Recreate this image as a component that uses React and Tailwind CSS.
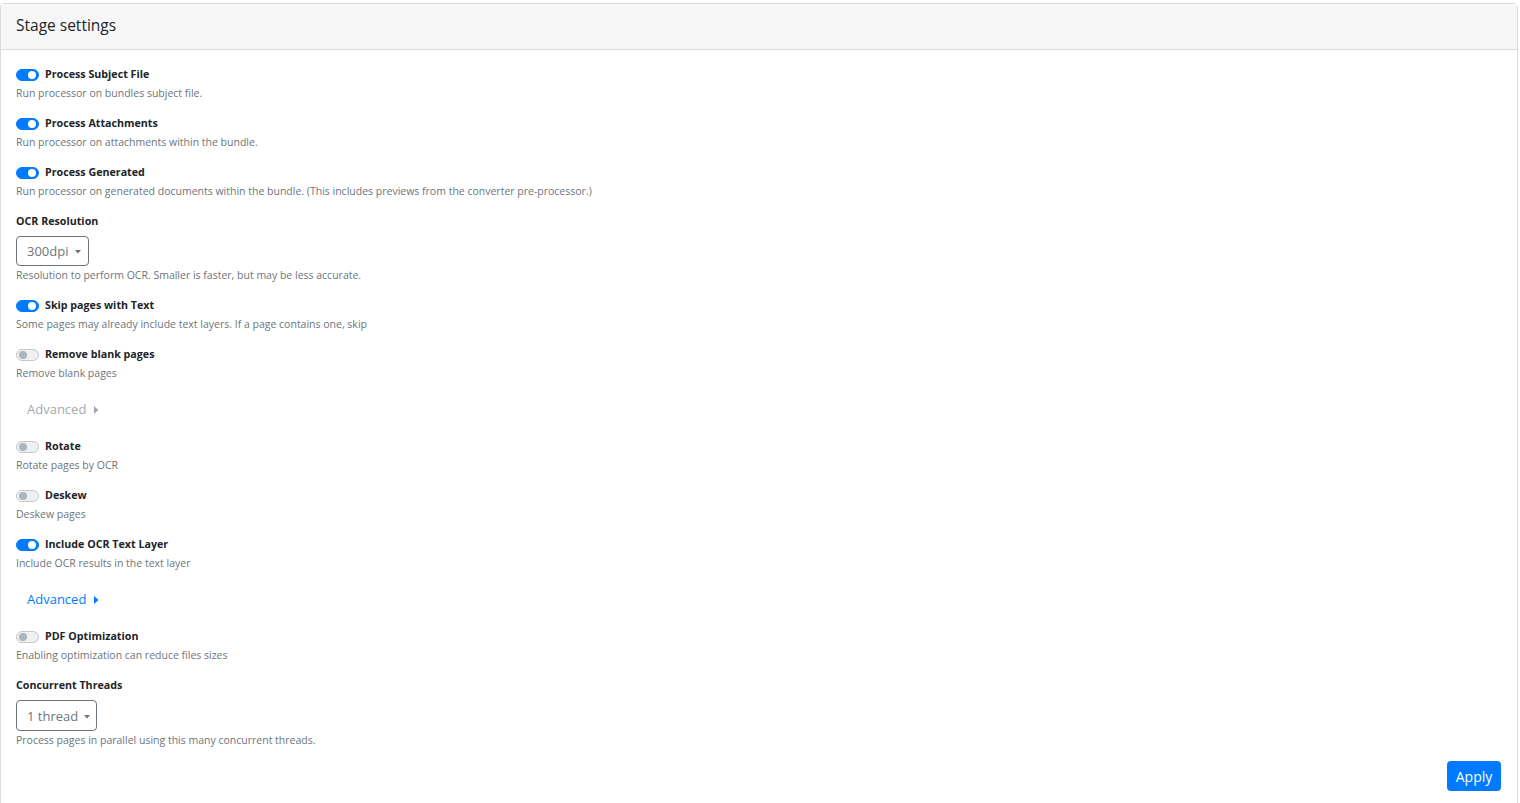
import React from "react";

const FONT = { fontFamily: '"Open Sans", "Noto Sans", Arial, sans-serif' };

function Toggle({ on }) {
  return on ? (
    <span className="relative inline-block w-[23px] h-[12px] rounded-full bg-[#007bff] border border-[#007bff] shrink-0">
      <span className="absolute right-[2px] top-[1px] w-[8px] h-[8px] rounded-full bg-white" />
    </span>
  ) : (
    <span className="relative inline-block w-[23px] h-[12px] rounded-full bg-[#eef0f2] border border-[#c4c9ce] shrink-0">
      <span className="absolute left-[2px] top-[1px] w-[8px] h-[8px] rounded-full bg-[#adb5bd]" />
    </span>
  );
}

function SwitchItem({ on, label, desc, last }) {
  return (
    <div className={last ? "" : "mb-[11px]"}>
      <div className="flex items-center h-[19px]">
        <Toggle on={on} />
        <span className="ml-[6px] text-[10.7px] font-bold text-[#212529]">{label}</span>
      </div>
      <div className="h-[19px] flex items-center text-[10.5px] text-[#6c757d]">{desc}</div>
    </div>
  );
}

function Caret({ color }) {
  return (
    <svg width="6" height="4" viewBox="0 0 6 4" className="ml-[6px]">
      <path d="M0 0 L6 0 L3 3.5 Z" fill={color} />
    </svg>
  );
}

function SelectBox({ value, width, height }) {
  return (
    <div
      className={`flex items-center border border-[#6c757d] rounded-[4px] pl-[10px] pt-[2px] text-[13px] text-[#6c757d] ${width} ${height}`}
    >
      <span>{value}</span>
      <Caret color="#6c757d" />
    </div>
  );
}

function Advanced({ blue }) {
  const color = blue ? "#007bff" : "#a5a9ad";
  return (
    <div className="pt-[16px] pb-[16px]">
      <div className="h-[22px] flex items-center pl-[11px] text-[13px]" style={{ color }}>
        <span>Advanced</span>
        <svg width="5" height="8" viewBox="0 0 5 8" className="ml-[8px]">
          <path d="M0 0 L4.5 4 L0 8 Z" fill={color} />
        </svg>
      </div>
    </div>
  );
}

export default function App() {
  return (
    <div className="w-[1520px] h-[803px] bg-white overflow-hidden pt-[3px]" style={FONT}>
      <div className="w-[1518px] border border-[#dcdcdc] rounded-[4px]">
        <div className="h-[46px] bg-[#f7f7f7] border-b border-[#dcdcdc] flex items-center pl-[15px] pb-[2px] text-[15.5px] text-[#212529]">
          Stage settings
        </div>
        <div className="pl-[15px] pr-[16px] pt-[15px] pb-[16px]">
          <SwitchItem on label="Process Subject File" desc="Run processor on bundles subject file." />
          <SwitchItem on label="Process Attachments" desc="Run processor on attachments within the bundle." />
          <SwitchItem
            on
            label="Process Generated"
            desc="Run processor on generated documents within the bundle. (This includes previews from the converter pre-processor.)"
          />
          <div className="mb-[11px]">
            <div className="h-[19px] flex items-center text-[10.7px] font-bold text-[#212529]">OCR Resolution</div>
            <div className="pt-[5px]">
              <SelectBox value="300dpi" width="w-[73px]" height="h-[30px]" />
            </div>
            <div className="h-[19px] flex items-center text-[10.5px] text-[#6c757d]">
              Resolution to perform OCR. Smaller is faster, but may be less accurate.
            </div>
          </div>
          <SwitchItem
            on
            label="Skip pages with Text"
            desc="Some pages may already include text layers. If a page contains one, skip"
          />
          <SwitchItem last label="Remove blank pages" desc="Remove blank pages" />
          <Advanced />
          <SwitchItem label="Rotate" desc="Rotate pages by OCR" />
          <SwitchItem label="Deskew" desc="Deskew pages" />
          <SwitchItem last on label="Include OCR Text Layer" desc="Include OCR results in the text layer" />
          <Advanced blue />
          <SwitchItem label="PDF Optimization" desc="Enabling optimization can reduce files sizes" />
          <div>
            <div className="h-[19px] flex items-center text-[10.7px] font-bold text-[#212529]">Concurrent Threads</div>
            <div className="pt-[5px]">
              <SelectBox value="1 thread" width="w-[81px]" height="h-[31px]" />
            </div>
            <div className="h-[19px] flex items-center text-[10.5px] text-[#6c757d]">
              Process pages in parallel using this many concurrent threads.
            </div>
          </div>
          <div className="flex justify-end mt-[11px]">
            <button className="w-[54px] h-[30px] bg-[#007bff] text-white text-[14px] rounded-[4px] flex items-center justify-center">
              Apply
            </button>
          </div>
        </div>
      </div>
    </div>
  );
}
